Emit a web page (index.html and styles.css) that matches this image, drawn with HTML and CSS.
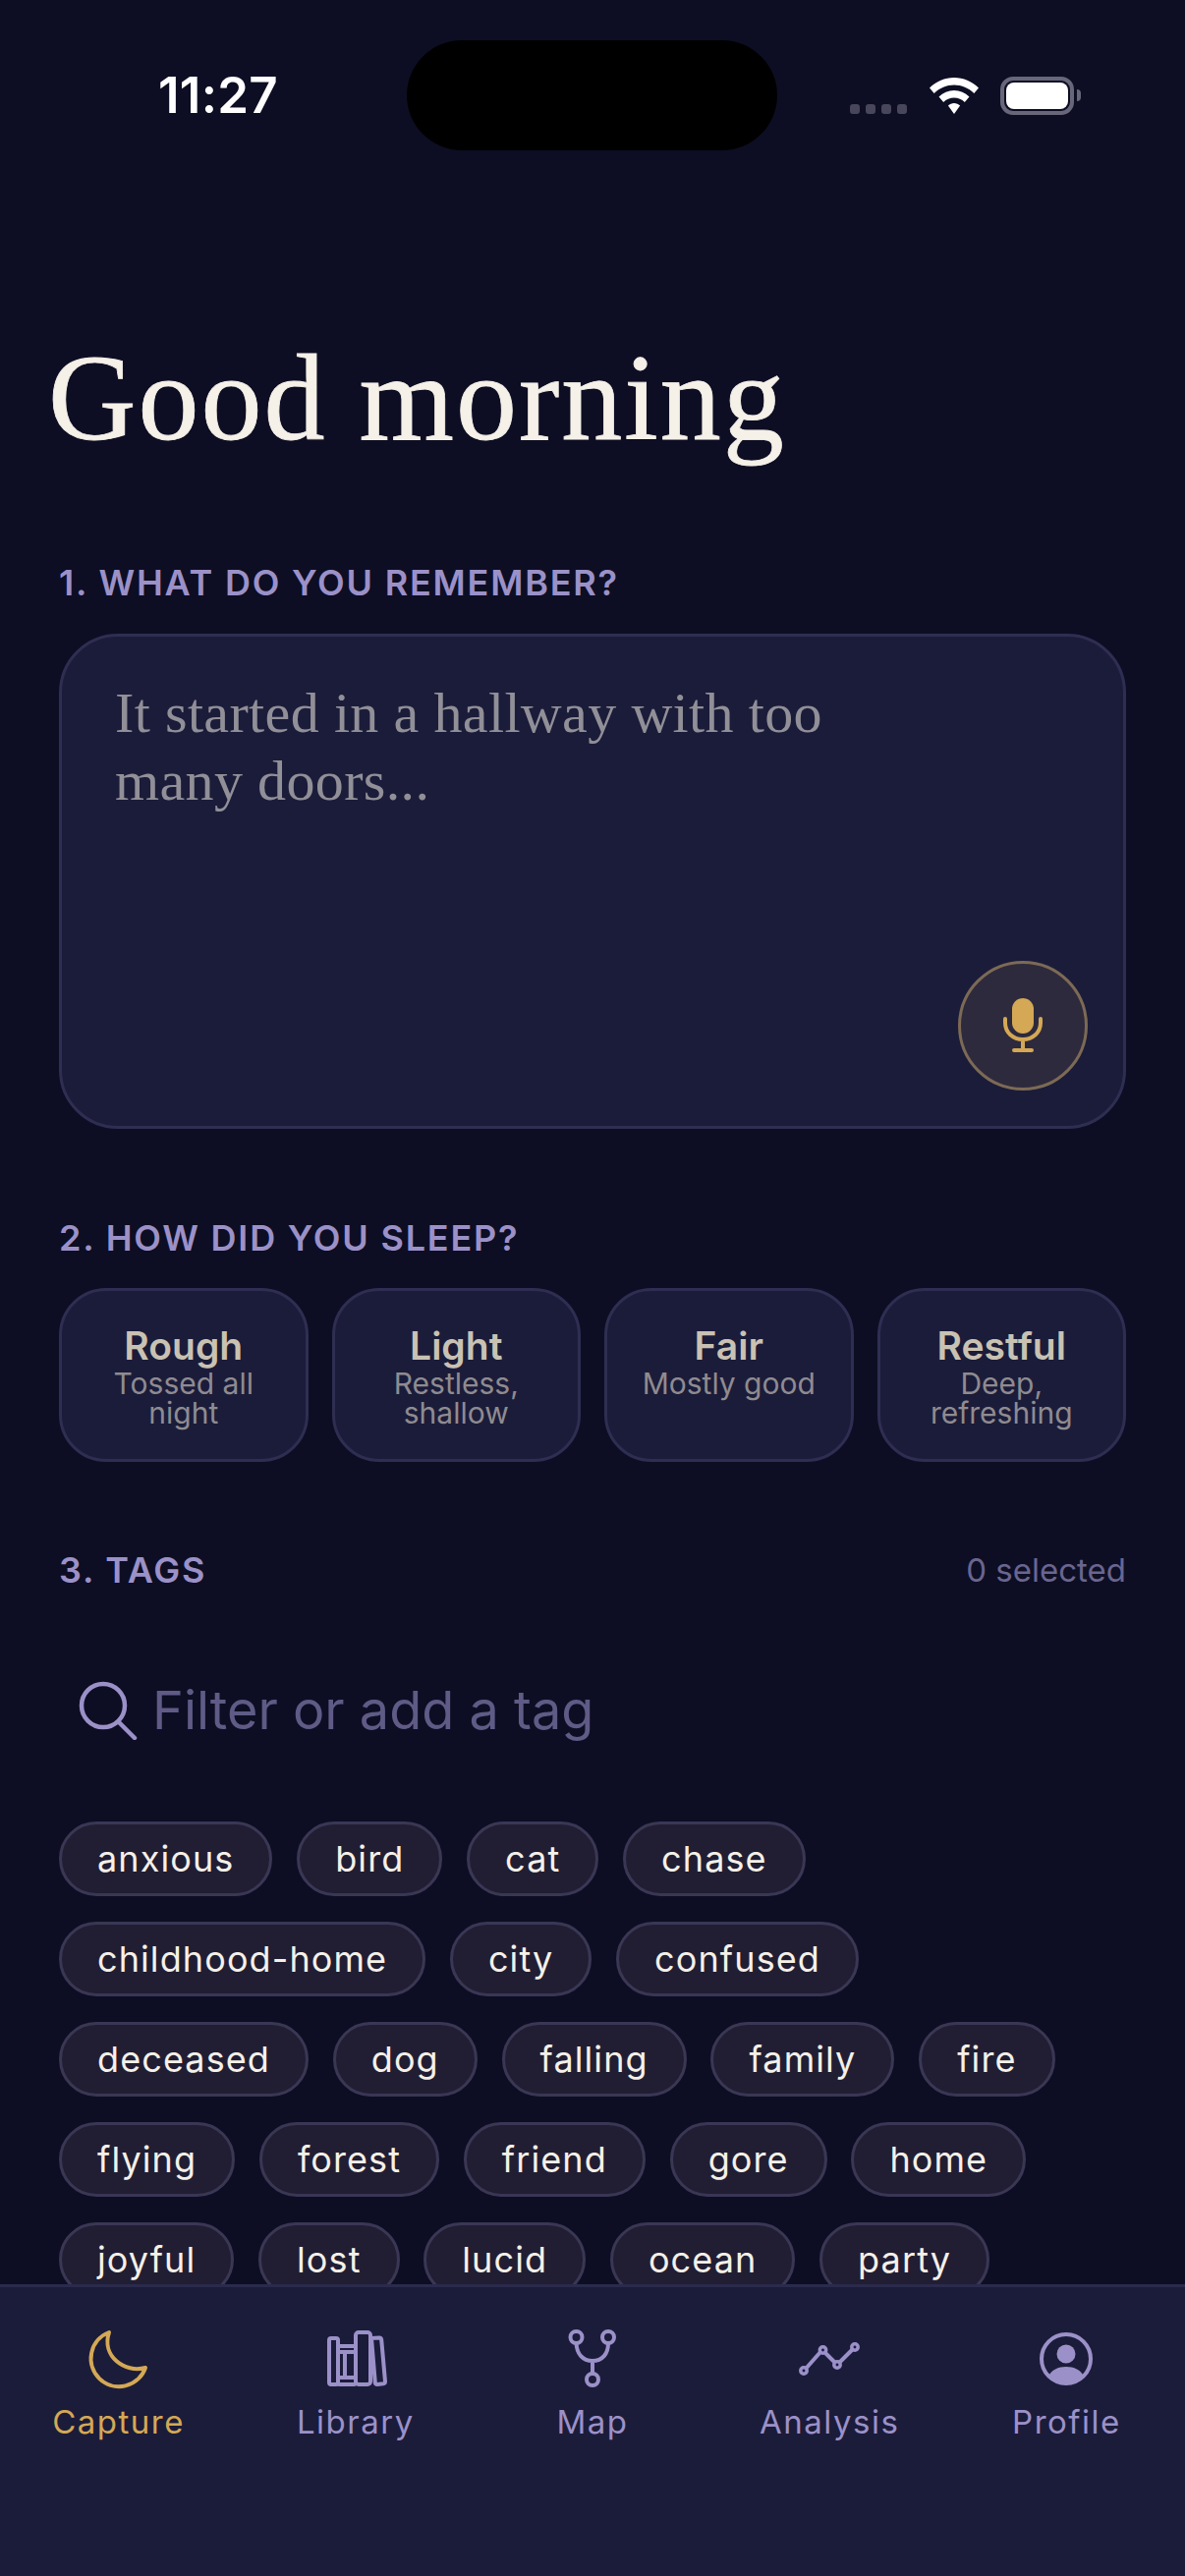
FILE: index.html
```html
<!DOCTYPE html>
<html lang="en">
<head>
<meta charset="utf-8">
<title>Capture</title>
<link rel="stylesheet" href="styles.css">
</head>
<body>
<div class="app">
  <header class="status">
    <span class="time">11:27</span>
    <div class="island"></div>
    <div class="status-icons">
      <div class="dots"><i></i><i></i><i></i><i></i></div>
      <svg class="wifi" viewBox="0 0 50 37"><path fill="#fff" d="M25 0C15.500 0 7 3.800 0 10.500L4.700 16C10.300 10.500 17.300 7.500 25 7.500S39.700 10.500 45.300 16L50 10.500C43 3.800 34.500 0 25 0ZM25 13C19 13 13.800 15.300 9.500 19.500L14.200 25C17 22.200 20.800 20.500 25 20.500S33 22.200 35.800 25L40.500 19.500C36.200 15.300 31 13 25 13ZM25 26C22.700 26 20.600 27 18.900 28.500L25 37L31.100 28.500C29.400 27 27.300 26 25 26Z"/></svg>
      <div class="battery"><div class="battery-level"></div></div>
      <div class="battery-nub"></div>
    </div>
  </header>
  <main class="content">
    <h1 class="greeting">Good morning</h1>
    <h2 class="label">1. What do you remember?</h2>
    <div class="dream-box">
      <p class="placeholder">It started in a hallway with too<br>many doors...</p>
      <button class="mic" aria-label="Record">
        <svg viewBox="0 0 40 56" class="mic-icon"><rect x="9" y="0" width="22" height="36" rx="11" fill="#d4a855"/><path d="M2 21V25C2 35 10 42 20 42S38 35 38 25V21M20 42V52M11 53H29" fill="none" stroke="#d4a855" stroke-width="4" stroke-linecap="round"/></svg>
      </button>
    </div>
    <h2 class="label label-sleep">2. How did you sleep?</h2>
    <div class="sleep-grid">
      <div class="sleep-card"><strong>Rough</strong><span>Tossed all night</span></div>
      <div class="sleep-card"><strong>Light</strong><span>Restless, shallow</span></div>
      <div class="sleep-card"><strong>Fair</strong><span>Mostly good</span></div>
      <div class="sleep-card"><strong>Restful</strong><span>Deep, refreshing</span></div>
    </div>
    <div class="tags-head">
      <h2 class="label label-tags">3. Tags</h2>
      <span class="count">0 selected</span>
    </div>
    <div class="filter">
      <svg class="search" viewBox="0 0 60 60"><circle cx="25" cy="25" r="22" fill="none" stroke="#9b91c8" stroke-width="4.500"/><path d="M41 42L57 58" stroke="#9b91c8" stroke-width="4.500" stroke-linecap="round"/></svg>
      <span class="filter-text">Filter or add a tag</span>
    </div>
    <div class="tags">
      <span class="tag">anxious</span><span class="tag">bird</span><span class="tag">cat</span><span class="tag">chase</span>
      <span class="tag">childhood-home</span><span class="tag">city</span><span class="tag">confused</span>
      <span class="tag">deceased</span><span class="tag">dog</span><span class="tag">falling</span><span class="tag">family</span><span class="tag">fire</span>
      <span class="tag">flying</span><span class="tag">forest</span><span class="tag">friend</span><span class="tag">gore</span><span class="tag">home</span>
      <span class="tag">joyful</span><span class="tag">lost</span><span class="tag">lucid</span><span class="tag">ocean</span><span class="tag">party</span>
    </div>
  </main>
  <nav class="tabbar">
    <div class="tab tab-active">
      <svg class="tab-icon" viewBox="0 0 66 66"><path d="M23 6A28.500 28.500 0 1 0 60 42C39 48 15 30 23 6Z" fill="none" stroke="currentColor" stroke-width="4" stroke-linejoin="round"/></svg>
      <span>Capture</span>
    </div>
    <div class="tab">
      <svg class="tab-icon" viewBox="0 0 66 66"><g fill="none" stroke="currentColor" stroke-width="4" stroke-linejoin="round"><rect x="6" y="12" width="9" height="47" rx="2"/><rect x="15" y="20" width="18" height="39" rx="2"/><path d="M15 26H33M15 52H33M22 26V52"/><rect x="33" y="6" width="15" height="53" rx="3"/><path d="M49 12L57 11.500Q59 11.500 59.200 13.500L63 56Q63 58 61 58.300L55 59Q53 59 52.800 57Z"/></g></svg>
      <span>Library</span>
    </div>
    <div class="tab">
      <svg class="tab-icon" viewBox="0 0 66 66"><g fill="none" stroke="currentColor" stroke-width="4"><circle cx="16.500" cy="11" r="6"/><circle cx="49" cy="11" r="6"/><circle cx="33" cy="54" r="6"/><path d="M16.500 17C17 28 23 35 33 35S49 28 49 17M33 35V48"/></g></svg>
      <span>Map</span>
    </div>
    <div class="tab">
      <svg class="tab-icon" viewBox="0 0 66 66"><g fill="none" stroke="currentColor" stroke-width="3.500"><path d="M9 43L24 26M29 27L38 36M44 36L57 23" stroke-width="4"/><circle cx="7" cy="45" r="3.200"/><circle cx="26.500" cy="24" r="3.200"/><circle cx="41" cy="39" r="3.200"/><circle cx="59" cy="21" r="3.200"/></g></svg>
      <span>Analysis</span>
    </div>
    <div class="tab">
      <svg class="tab-icon" viewBox="0 0 66 66"><circle cx="33" cy="33" r="25" fill="none" stroke="currentColor" stroke-width="4"/><circle cx="33" cy="28" r="9.500" fill="currentColor"/><path d="M15 51C18 44 25 41 33 41S48 44 51 51A25 25 0 0 1 15 51Z" fill="currentColor"/></svg>
      <span>Profile</span>
    </div>
  </nav>
</div>
</body>
</html>
```

FILE: styles.css
```css
* { box-sizing: border-box; margin: 0; padding: 0; }
html, body { width: 1206px; height: 2622px; overflow: hidden; }
body { background: #0d0e23; font-family: Inter, "Liberation Sans", sans-serif; }
.app { width: 1206px; height: 2622px; display: flex; flex-direction: column; position: relative; }

.status { flex: none; height: 160px; display: flex; justify-content: space-between; align-items: flex-start; padding: 0 106px 0 161px; }
.time { margin-top: 66px; font-size: 51px; line-height: 62px; font-weight: 600; color: #fff; letter-spacing: 0.300px; }
.island { position: absolute; left: 414px; top: 41px; width: 377px; height: 112px; border-radius: 56px; background: #000; }
.status-icons { display: flex; align-items: flex-start; margin-top: 78px; }
.dots { display: flex; gap: 6px; margin-top: 28px; margin-right: 23px; }
.dots i { display: block; width: 10px; height: 10px; border-radius: 3px; background: #47465a; }
.wifi { width: 50px; height: 37px; margin-top: 1px; margin-right: 22px; }
.battery { width: 75px; height: 39px; border: 4px solid #68677a; border-radius: 13px; padding: 2px; }
.battery-level { width: 100%; height: 100%; background: #fff; border-radius: 8px; }
.battery-nub { width: 4px; height: 12px; margin: 13px 0 0 3px; background: #68677a; border-radius: 0 4px 4px 0; }

.content { flex: 1; min-height: 0; overflow: hidden; padding: 0 60px; }
.greeting { font-family: "Liberation Serif", serif; font-weight: 400; font-size: 124px; line-height: 140px; color: #f5f0e8; margin: 176px 0 0 -11px; letter-spacing: 2px; -webkit-text-stroke: 0.8px #f5f0e8; white-space: nowrap; }
.label { font-size: 36px; line-height: 44px; font-weight: 600; letter-spacing: 1.800px; text-transform: uppercase; color: #9b91c8; margin-top: 95px; }
.label-sleep { margin-top: 89px; }
.label-tags { margin-top: 0; }

.dream-box { position: relative; height: 504px; margin-top: 30px; background: #1b1c3a; border: 3px solid #2f2e52; border-radius: 60px; padding: 43px 54px; }
.placeholder { font-family: "Liberation Serif", serif; font-size: 58px; line-height: 69px; letter-spacing: 0.350px; color: #918f97; }
.mic { position: absolute; right: 36px; bottom: 36px; width: 132px; height: 132px; border-radius: 50%; border: 3px solid #7c6a55; background: #2e2a3d; display: flex; align-items: center; justify-content: center; }
.mic-icon { width: 40px; height: 56px; }

.sleep-grid { display: grid; grid-template-columns: repeat(4, 1fr); gap: 24px; margin-top: 29px; }
.sleep-card { height: 177px; background: #1b1c3a; border: 3px solid #2f2e52; border-radius: 48px; padding: 33px 24px 0; text-align: center; display: flex; flex-direction: column; align-items: center; }
.sleep-card strong { font-size: 39px; line-height: 46px; font-weight: 600; color: #c9c2b3; }
.sleep-card span { font-size: 30px; line-height: 30px; font-weight: 400; color: #8f8b90; }

.tags-head { display: flex; justify-content: space-between; align-items: center; margin-top: 88px; }
.count { font-size: 33px; line-height: 44px; color: #6a6590; }

.filter { display: flex; align-items: center; gap: 15px; margin-top: 66px; padding-left: 20px; height: 110px; }
.search { width: 60px; height: 60px; flex: none; }
.filter-text { font-size: 54px; line-height: 60px; color: #5f5b86; }

.tags { display: flex; flex-wrap: wrap; column-gap: 24.750px; row-gap: 26px; margin-top: 58px; }
.tag { height: 76px; padding: 0 36px; display: flex; align-items: center; border: 3px solid #3a3755; border-radius: 38px; background: #211e33; color: #f5f0e8; font-size: 36px; letter-spacing: 1.100px; }

.tabbar { flex: none; height: 297px; background: #1b1c3a; border-top: 3px solid #2a2a4c; display: flex; padding: 40px 0 0; }
.tab { flex: 1; display: flex; flex-direction: column; align-items: center; color: #9b91c8; }
.tab-active { color: #d4a855; }
.tab-icon { width: 66px; height: 66px; flex: none; }
.tab span { font-size: 33px; line-height: 40px; margin-top: 11px; letter-spacing: 1.500px; }
```
